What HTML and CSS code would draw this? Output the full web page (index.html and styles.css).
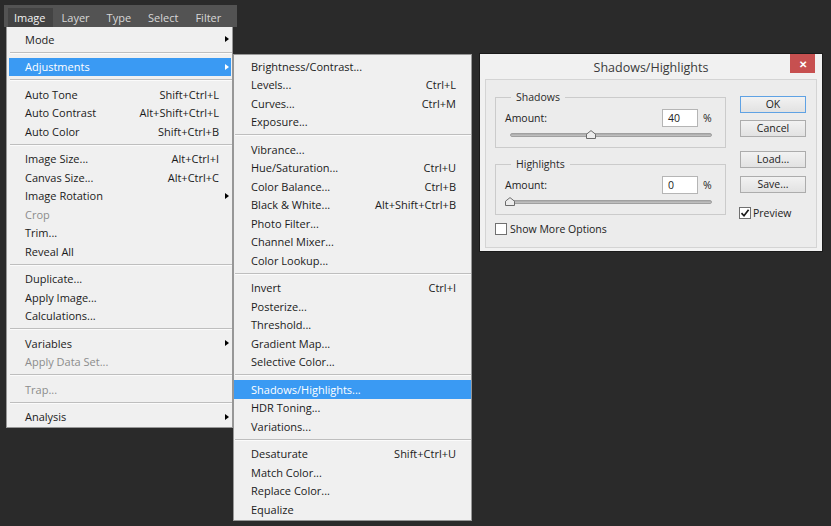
FILE: index.html
```html
<!DOCTYPE html>
<html>
<head>
<meta charset="utf-8">
<link rel="stylesheet" href="styles.css">
</head>
<body>
<div class="menubar">
  <span class="mb-item active">Image</span>
  <span class="mb-item">Layer</span>
  <span class="mb-item">Type</span>
  <span class="mb-item">Select</span>
  <span class="mb-item">Filter</span>
</div>

<div class="menu main-menu">
  <div class="item"><span class="label">Mode</span><span class="key"></span><span class="arrow-slot"><i class="arrow"></i></span></div>
  <div class="sep"></div>
  <div class="item hl"><span class="label">Adjustments</span><span class="key"></span><span class="arrow-slot"><i class="arrow"></i></span></div>
  <div class="sep"></div>
  <div class="item"><span class="label">Auto Tone</span><span class="key">Shift+Ctrl+L</span><span class="arrow-slot"></span></div>
  <div class="item"><span class="label">Auto Contrast</span><span class="key">Alt+Shift+Ctrl+L</span><span class="arrow-slot"></span></div>
  <div class="item"><span class="label">Auto Color</span><span class="key">Shift+Ctrl+B</span><span class="arrow-slot"></span></div>
  <div class="sep"></div>
  <div class="item"><span class="label">Image Size...</span><span class="key">Alt+Ctrl+I</span><span class="arrow-slot"></span></div>
  <div class="item"><span class="label">Canvas Size...</span><span class="key">Alt+Ctrl+C</span><span class="arrow-slot"></span></div>
  <div class="item"><span class="label">Image Rotation</span><span class="key"></span><span class="arrow-slot"><i class="arrow"></i></span></div>
  <div class="item dis"><span class="label">Crop</span><span class="key"></span><span class="arrow-slot"></span></div>
  <div class="item"><span class="label">Trim...</span><span class="key"></span><span class="arrow-slot"></span></div>
  <div class="item"><span class="label">Reveal All</span><span class="key"></span><span class="arrow-slot"></span></div>
  <div class="sep"></div>
  <div class="item"><span class="label">Duplicate...</span><span class="key"></span><span class="arrow-slot"></span></div>
  <div class="item"><span class="label">Apply Image...</span><span class="key"></span><span class="arrow-slot"></span></div>
  <div class="item"><span class="label">Calculations...</span><span class="key"></span><span class="arrow-slot"></span></div>
  <div class="sep"></div>
  <div class="item"><span class="label">Variables</span><span class="key"></span><span class="arrow-slot"><i class="arrow"></i></span></div>
  <div class="item dis"><span class="label">Apply Data Set...</span><span class="key"></span><span class="arrow-slot"></span></div>
  <div class="sep"></div>
  <div class="item dis"><span class="label">Trap...</span><span class="key"></span><span class="arrow-slot"></span></div>
  <div class="sep"></div>
  <div class="item"><span class="label">Analysis</span><span class="key"></span><span class="arrow-slot"><i class="arrow"></i></span></div>
</div>

<div class="menu sub-menu">
  <div class="item"><span class="label">Brightness/Contrast...</span></div>
  <div class="item"><span class="label">Levels...</span><span class="key">Ctrl+L</span></div>
  <div class="item"><span class="label">Curves...</span><span class="key">Ctrl+M</span></div>
  <div class="item"><span class="label">Exposure...</span></div>
  <div class="sep"></div>
  <div class="item"><span class="label">Vibrance...</span></div>
  <div class="item"><span class="label">Hue/Saturation...</span><span class="key">Ctrl+U</span></div>
  <div class="item"><span class="label">Color Balance...</span><span class="key">Ctrl+B</span></div>
  <div class="item"><span class="label">Black &amp; White...</span><span class="key">Alt+Shift+Ctrl+B</span></div>
  <div class="item"><span class="label">Photo Filter...</span></div>
  <div class="item"><span class="label">Channel Mixer...</span></div>
  <div class="item"><span class="label">Color Lookup...</span></div>
  <div class="sep"></div>
  <div class="item"><span class="label">Invert</span><span class="key">Ctrl+I</span></div>
  <div class="item"><span class="label">Posterize...</span></div>
  <div class="item"><span class="label">Threshold...</span></div>
  <div class="item"><span class="label">Gradient Map...</span></div>
  <div class="item"><span class="label">Selective Color...</span></div>
  <div class="sep"></div>
  <div class="item hl"><span class="label">Shadows/Highlights...</span></div>
  <div class="item"><span class="label">HDR Toning...</span></div>
  <div class="item"><span class="label">Variations...</span></div>
  <div class="sep"></div>
  <div class="item"><span class="label">Desaturate</span><span class="key">Shift+Ctrl+U</span></div>
  <div class="item"><span class="label">Match Color...</span></div>
  <div class="item"><span class="label">Replace Color...</span></div>
  <div class="item"><span class="label">Equalize</span></div>
</div>

<div class="dialog">
  <div class="titlebar">
    <span class="title">Shadows/Highlights</span>
    <span class="close">&#x2715;</span>
  </div>
  <div class="panel">
    <div class="controls">
      <fieldset class="group">
        <legend>Shadows</legend>
        <div class="amount"><span class="amt-label">Amount:</span><span class="field">40</span><span class="pct">%</span></div>
        <div class="slider">
          <div class="track"></div>
          <svg class="thumb" style="left:40%" width="10" height="9" viewBox="0 0 10 9"><path d="M0.5 8.5 V4.2 L5 0.6 L9.5 4.2 V8.5 Z" fill="#ececec" stroke="#6b6b6b"/></svg>
        </div>
      </fieldset>
      <fieldset class="group second">
        <legend>Highlights</legend>
        <div class="amount"><span class="amt-label">Amount:</span><span class="field">0</span><span class="pct">%</span></div>
        <div class="slider">
          <div class="track"></div>
          <svg class="thumb" style="left:0%" width="10" height="9" viewBox="0 0 10 9"><path d="M0.5 8.5 V4.2 L5 0.6 L9.5 4.2 V8.5 Z" fill="#ececec" stroke="#6b6b6b"/></svg>
        </div>
      </fieldset>
      <div class="check more"><span class="box"></span><span>Show More Options</span></div>
    </div>
    <div class="buttons">
      <div class="btn ok">OK</div>
      <div class="btn cancel">Cancel</div>
      <div class="btn load">Load...</div>
      <div class="btn save">Save...</div>
      <div class="check preview"><span class="box"><svg width="10" height="10" viewBox="0 0 10 10"><path d="M1.5 5.2 L4 7.8 L8.6 1.8" fill="none" stroke="#1a1a1a" stroke-width="1.7"/></svg></span><span>Preview</span></div>
    </div>
  </div>
</div>
</body>
</html>
```

FILE: styles.css
```css
* { box-sizing: border-box; }
html, body { margin: 0; }
body {
  width: 831px;
  height: 526px;
  overflow: hidden;
  background: #2a2a2a;
  font-family: "Open Sans", "Noto Sans", sans-serif;
  position: relative;
  padding: 5px 0 0 4px;
}

/* menu bar */
.menubar {
  width: 233px;
  height: 22px;
  background: #535353;
  display: flex;
  align-items: flex-end;
  padding-left: 4px;
  font-size: 11px;
  color: #d8d8d8;
}
.mb-item {
  height: 19px;
  line-height: 19px;
  padding: 0 7px 0 6px;
  margin-right: 4px;
}
.mb-item.active { background: #434343; color: #f2f2f2; margin-right: 3px; }

/* menus */
.menu {
  position: absolute;
  background: #f0f0f0;
  border: 1px solid #979797;
  font-size: 11px;
  color: #1b1b1b;
}
.main-menu {
  left: 6px;
  top: 27px;
  width: 227px;
  border-top: none;
  padding: 3px 1px 1px 2px;
}
.sub-menu {
  left: 233px;
  top: 54px;
  width: 239px;
  padding: 2px 0 1.5px 0;
}
.item {
  display: flex;
  align-items: center;
  height: 18.5px;
  white-space: nowrap;
}
.main-menu .item { padding-left: 16px; }
.sub-menu .item { padding: 0 15px 0 17px; }
.label { flex: 1; }
.arrow-slot {
  width: 12px;
  display: flex;
  justify-content: flex-end;
  padding-right: 2px;
}
.arrow {
  width: 0;
  height: 0;
  border-left: 4px solid #000;
  border-top: 3.5px solid transparent;
  border-bottom: 3.5px solid transparent;
}
.item.hl { background: #3a9af3; color: #fff; }
.item.hl .arrow { border-left-color: #fff; }
.item.dis { color: #8c8c8c; }
.sep {
  height: 0;
  border-top: 1px solid #bebebe;
  border-bottom: 1px solid #fbfbfb;
  margin: 3px 0 4px 1px;
}
.main-menu .sep { margin: 3px -1px 4px 1px; }

/* dialog */
.dialog {
  position: absolute;
  left: 479px;
  top: 53px;
  width: 344px;
  height: 199px;
  background: #f1f1f1;
  border: 1px solid #1a1a1a;
  font-size: 10.5px;
  color: #222;
  display: flex;
  flex-direction: column;
}
.titlebar {
  height: 25px;
  position: relative;
  display: flex;
  justify-content: center;
  align-items: center;
  padding-top: 2px;
}
.title { font-size: 12.5px; color: #3a3a3a; }
.close {
  position: absolute;
  top: 0;
  right: 7px;
  width: 25px;
  height: 19px;
  background: #c75050;
  color: #fff;
  font-size: 10px;
  font-weight: bold;
  display: flex;
  align-items: center;
  justify-content: center;
}
.panel {
  flex: 1;
  margin: 0 5px 3px 5px;
  background: #ececec;
  border: 1px solid #d4d4d4;
  display: flex;
  padding: 10px 0 0 9px;
}
.controls { width: 231px; }
.group {
  margin: 0;
  padding: 0 13px 6px 9px;
  border: 1px solid #cbcbcb;
  min-inline-size: 0;
}
.group.second { margin-top: 9px; }
legend {
  padding: 0 5px;
  margin-left: 6px;
  line-height: 14px;
  color: #2a2a2a;
}
.amount {
  display: flex;
  align-items: center;
  height: 18px;
  margin-top: 5px;
}
.amt-label { flex: 1; margin-top: -1px; }
.field {
  width: 36px;
  height: 18px;
  background: #fff;
  border: 1px solid #b5b5b5;
  padding-left: 5px;
  line-height: 16px;
}
.pct { margin-left: 5px; width: 9px; }
.slider {
  position: relative;
  height: 12px;
  margin: 2px 0 0 5px;
}
.track {
  position: relative;
  top: 4px;
  height: 4px;
  border-radius: 2px;
  background: linear-gradient(#a9a9a9, #c4c4c4);
  border: 1px solid #a0a0a0;
}
.thumb {
  position: absolute;
  top: 1px;
  transform: translateX(-50%);
  display: block;
}
.check {
  display: flex;
  align-items: center;
  gap: 3px;
  height: 13px;
}
.check.more { margin-top: 7px; }
.box {
  width: 12px;
  height: 12px;
  background: #fff;
  border: 1px solid #707070;
  display: flex;
  align-items: center;
  justify-content: center;
}
.buttons {
  width: 66px;
  margin-left: 14px;
  padding-top: 6px;
  display: flex;
  flex-direction: column;
}
.btn {
  height: 17px;
  line-height: 15px;
  text-align: center;
  border: 1px solid #acacac;
  background: linear-gradient(#f2f2f2, #e2e2e2);
  color: #222;
}
.btn.ok { border-color: #5fa2e4; }
.btn.cancel { margin-top: 7px; }
.btn.load { margin-top: 14px; }
.btn.save { margin-top: 8px; }
.check.preview { margin-top: 13px; margin-left: -1px; gap: 2px; }
```
